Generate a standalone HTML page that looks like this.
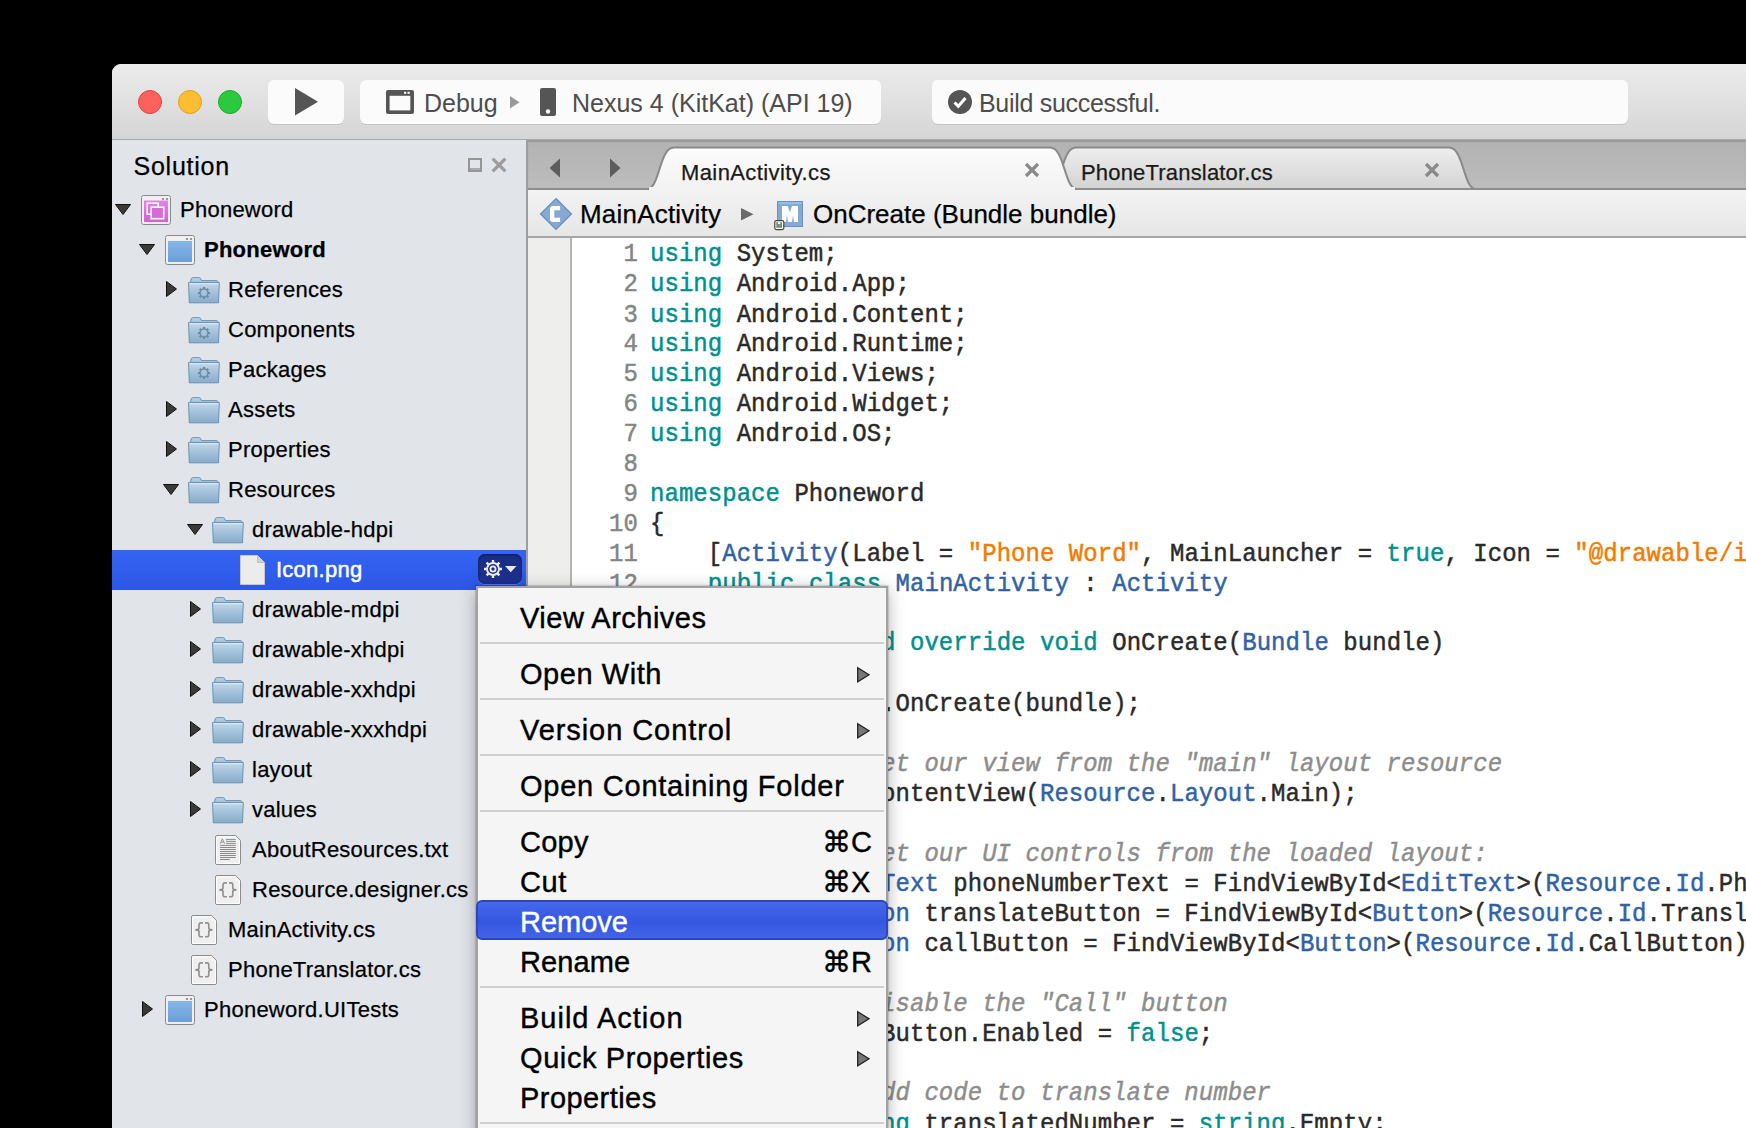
<!DOCTYPE html><html><head><meta charset="utf-8"><style>
*{margin:0;padding:0;box-sizing:border-box}
html,body{width:1746px;height:1128px;overflow:hidden;background:#000}
body{position:relative;font-family:"Liberation Sans",sans-serif}
.a{position:absolute}
svg{position:absolute;overflow:visible}
#win{position:absolute;left:112px;top:64px;width:1634px;height:1064px;background:#e1e4e9;border-top-left-radius:9px;overflow:hidden}
#tb{position:absolute;left:0;top:0;width:1634px;height:76px;background:linear-gradient(#ececec,#d5d5d5);border-bottom:1px solid #a9a9a9}
.tl{position:absolute;top:26px;width:24px;height:24px;border-radius:50%}
.pill{position:absolute;top:16px;height:44px;background:#fbfbfb;border-radius:6px;box-shadow:0 1px 0 #c4c4c4}
.tbt{position:absolute;font-size:25px;color:#4d4d4d;white-space:nowrap;line-height:30px}
.rt{position:absolute;font-size:22px;line-height:30px;color:#000;white-space:nowrap;-webkit-text-stroke:0.25px currentColor}
.tr{letter-spacing:0.25px}
.code{position:absolute;font-family:"Liberation Mono",monospace;font-size:24px;white-space:pre;line-height:27.2727px;color:#2a2a2a;transform:scaleY(1.1);transform-origin:0 0;-webkit-text-stroke:0.45px currentColor;letter-spacing:0.04px}
.ln{position:absolute;font-family:"Liberation Mono",monospace;font-size:24px;white-space:pre;line-height:27.2727px;color:#858585;text-align:right;width:60px;transform:scaleY(1.1);transform-origin:0 0;-webkit-text-stroke:0.45px currentColor;letter-spacing:0.04px}
.k{color:#00908f}.t{color:#3162a6}.s{color:#f27b00}.c{color:#8d8d8d;font-style:italic}
.mi{position:absolute;font-size:29px;line-height:34px;color:#000;white-space:nowrap;-webkit-text-stroke:0.4px currentColor}
.sep{position:absolute;left:4px;width:404px;height:2px;background:#cfcfcf}
</style></head><body>
<div id="win">
<div id="tb">
<div class="tl" style="left:26px;background:#fc615d;border:1px solid #e0443e"></div>
<div class="tl" style="left:66px;background:#fdbd30;border:1px solid #dfa023"></div>
<div class="tl" style="left:106px;background:#2bc940;border:1px solid #1aab29"></div>
<div class="pill" style="left:156px;width:76px"></div>
<div class="pill" style="left:248px;width:521px"></div>
<div class="pill" style="left:820px;width:696px"></div>
</div>
</div>
<svg style="left:295px;top:88px" width="24" height="28"><path d="M0 0 L23 13.75 L0 27.5Z" fill="#555"/></svg>
<svg style="left:386px;top:90px" width="28" height="24"><rect x="0" y="0" width="28" height="24" rx="2" fill="#555"/><rect x="3.6" y="5.8" width="20.7" height="14.6" fill="#fbfbfb"/><rect x="18" y="1.8" width="2.2" height="2" fill="#fbfbfb"/><rect x="21.5" y="1.8" width="2.2" height="2" fill="#fbfbfb"/></svg>
<div class="tbt" style="left:424px;top:88px">Debug</div>
<svg style="left:510px;top:96px" width="10" height="13"><path d="M0 0 L9.5 6.3 L0 12.6Z" fill="#9a9a9a"/></svg>
<svg style="left:540px;top:88px" width="16" height="28"><rect x="0" y="0" width="16" height="28" rx="2" fill="#555"/><circle cx="8" cy="23.5" r="2.2" fill="#fbfbfb"/></svg>
<div class="tbt" style="left:572px;top:88px">Nexus 4 (KitKat) (API 19)</div>
<svg style="left:948px;top:90px" width="24" height="24"><circle cx="12" cy="12" r="12" fill="#555"/><path d="M6.5 12.5 L10.3 16.3 L17.5 8" fill="none" stroke="#fff" stroke-width="3"/></svg>
<div class="tbt" style="left:979px;top:88px;letter-spacing:-0.3px">Build successful.</div>
<div class="a" style="left:526px;top:140px;width:2px;height:988px;background:#9a9fa3"></div>
<div class="rt" style="left:133.5px;top:151px;font-size:25px;letter-spacing:0.75px">Solution</div>
<svg style="left:468px;top:158px" width="15" height="14"><path d="M0 0 H14 V14 H0Z M2 2 V10.2 H12 V2Z" fill="#959595" fill-rule="evenodd"/><rect x="2" y="10.2" width="10" height="1.8" fill="#a9a9a9"/></svg>
<svg style="left:492px;top:158px" width="14" height="14"><path d="M1.8 1.8 L12.2 12.2 M12.2 1.8 L1.8 12.2" stroke="#9c9c9c" stroke-width="3.2" stroke-linecap="square"/></svg>
<div class="a" style="left:112px;top:550px;width:414px;height:40px;background:linear-gradient(#3463f2,#2d57e6)"></div>
<svg style="left:115px;top:204px" width="16" height="11"><path d="M0.5 0.5 L15.5 0.5 L8 10.5Z" fill="#3a3a3a" stroke="#111" stroke-width="1"/></svg>
<svg style="left:141px;top:195px" width="30" height="30"><defs><linearGradient id="gm" x1="0" y1="0" x2="0" y2="1"><stop offset="0" stop-color="#ea7fea"/><stop offset="1" stop-color="#d35fd3"/></linearGradient></defs><rect x="0.5" y="0.5" width="29" height="29" rx="2" fill="#f1efed" stroke="#8a8a8a"/><rect x="21" y="3" width="2" height="2" fill="#999"/><rect x="25" y="3" width="2" height="2" fill="#999"/><rect x="3" y="5.5" width="24" height="21.5" fill="url(#gm)"/><rect x="6.2" y="8.2" width="11" height="11" fill="none" stroke="#fff" stroke-width="1.6"/><rect x="10.2" y="12.2" width="12.5" height="11.5" fill="#d86ad8" stroke="#fff" stroke-width="1.6"/></svg>
<div class="rt tr" style="left:180px;top:195px;color:#000;">Phoneword</div>
<svg style="left:139px;top:244px" width="16" height="11"><path d="M0.5 0.5 L15.5 0.5 L8 10.5Z" fill="#3a3a3a" stroke="#111" stroke-width="1"/></svg>
<svg style="left:165px;top:235px" width="30" height="30"><defs><linearGradient id="gb" x1="0" y1="0" x2="0" y2="1"><stop offset="0" stop-color="#84b6ea"/><stop offset="1" stop-color="#6c9fd8"/></linearGradient></defs><rect x="0.5" y="0.5" width="29" height="29" rx="2" fill="#f1efed" stroke="#8a8a8a"/><rect x="21" y="3" width="2" height="2" fill="#999"/><rect x="25" y="3" width="2" height="2" fill="#999"/><rect x="3" y="6" width="24" height="21" fill="url(#gb)"/></svg>
<div class="rt tr" style="left:204px;top:235px;color:#000;font-weight:bold;">Phoneword</div>
<svg style="left:166px;top:281px" width="11" height="16"><path d="M0.5 0.5 L10.5 8 L0.5 15.5Z" fill="#3a3a3a" stroke="#111" stroke-width="1"/></svg>
<svg style="left:188px;top:277px" width="32" height="28"><defs><linearGradient id="gf" x1="0" y1="0" x2="0" y2="1"><stop offset="0" stop-color="#c0d7e9"/><stop offset="1" stop-color="#87acca"/></linearGradient><linearGradient id="gft" x1="0" y1="0" x2="0" y2="1"><stop offset="0" stop-color="#bcd6ea"/><stop offset="1" stop-color="#9dbdd6"/></linearGradient></defs><path d="M2.2 6 L3.2 2 Q3.7 0.6 5.2 0.6 L10.8 0.6 Q12.2 0.6 12.8 2 L13.6 3.6 L28 3.6 Q29.2 3.6 30 4.6 L31 6Z" fill="url(#gft)" stroke="#6d95b5" stroke-width="1"/><path d="M0.5 5.6 H31.3 L30.5 25.8 H1.3Z" fill="url(#gf)" stroke="#6a92b3" stroke-width="1"/><path d="M1.6 6.8 H30.2" stroke="#e2eff8" stroke-width="1"/><g transform="translate(16,16)"><circle r="4" fill="none" stroke="#6f8fab" stroke-width="1.6"/><path d="M0 -6V-3.8M0 3.8V6M-6 0H-3.8M3.8 0H6M-4.3 -4.3L-2.8 -2.8M2.8 2.8L4.3 4.3M4.3 -4.3L2.8 -2.8M-2.8 2.8L-4.3 4.3" stroke="#6a8aa6" stroke-width="2"/><circle r="1.8" fill="#a9c6dc"/></g></svg>
<div class="rt tr" style="left:228px;top:275px;color:#000;">References</div>
<svg style="left:188px;top:317px" width="32" height="28"><defs><linearGradient id="gf" x1="0" y1="0" x2="0" y2="1"><stop offset="0" stop-color="#c0d7e9"/><stop offset="1" stop-color="#87acca"/></linearGradient><linearGradient id="gft" x1="0" y1="0" x2="0" y2="1"><stop offset="0" stop-color="#bcd6ea"/><stop offset="1" stop-color="#9dbdd6"/></linearGradient></defs><path d="M2.2 6 L3.2 2 Q3.7 0.6 5.2 0.6 L10.8 0.6 Q12.2 0.6 12.8 2 L13.6 3.6 L28 3.6 Q29.2 3.6 30 4.6 L31 6Z" fill="url(#gft)" stroke="#6d95b5" stroke-width="1"/><path d="M0.5 5.6 H31.3 L30.5 25.8 H1.3Z" fill="url(#gf)" stroke="#6a92b3" stroke-width="1"/><path d="M1.6 6.8 H30.2" stroke="#e2eff8" stroke-width="1"/><g transform="translate(16,16)"><circle r="4" fill="none" stroke="#6f8fab" stroke-width="1.6"/><path d="M0 -6V-3.8M0 3.8V6M-6 0H-3.8M3.8 0H6M-4.3 -4.3L-2.8 -2.8M2.8 2.8L4.3 4.3M4.3 -4.3L2.8 -2.8M-2.8 2.8L-4.3 4.3" stroke="#6a8aa6" stroke-width="2"/><circle r="1.8" fill="#a9c6dc"/></g></svg>
<div class="rt tr" style="left:228px;top:315px;color:#000;">Components</div>
<svg style="left:188px;top:357px" width="32" height="28"><defs><linearGradient id="gf" x1="0" y1="0" x2="0" y2="1"><stop offset="0" stop-color="#c0d7e9"/><stop offset="1" stop-color="#87acca"/></linearGradient><linearGradient id="gft" x1="0" y1="0" x2="0" y2="1"><stop offset="0" stop-color="#bcd6ea"/><stop offset="1" stop-color="#9dbdd6"/></linearGradient></defs><path d="M2.2 6 L3.2 2 Q3.7 0.6 5.2 0.6 L10.8 0.6 Q12.2 0.6 12.8 2 L13.6 3.6 L28 3.6 Q29.2 3.6 30 4.6 L31 6Z" fill="url(#gft)" stroke="#6d95b5" stroke-width="1"/><path d="M0.5 5.6 H31.3 L30.5 25.8 H1.3Z" fill="url(#gf)" stroke="#6a92b3" stroke-width="1"/><path d="M1.6 6.8 H30.2" stroke="#e2eff8" stroke-width="1"/><g transform="translate(16,16)"><circle r="4" fill="none" stroke="#6f8fab" stroke-width="1.6"/><path d="M0 -6V-3.8M0 3.8V6M-6 0H-3.8M3.8 0H6M-4.3 -4.3L-2.8 -2.8M2.8 2.8L4.3 4.3M4.3 -4.3L2.8 -2.8M-2.8 2.8L-4.3 4.3" stroke="#6a8aa6" stroke-width="2"/><circle r="1.8" fill="#a9c6dc"/></g></svg>
<div class="rt tr" style="left:228px;top:355px;color:#000;">Packages</div>
<svg style="left:166px;top:401px" width="11" height="16"><path d="M0.5 0.5 L10.5 8 L0.5 15.5Z" fill="#3a3a3a" stroke="#111" stroke-width="1"/></svg>
<svg style="left:188px;top:397px" width="32" height="28"><defs><linearGradient id="gf" x1="0" y1="0" x2="0" y2="1"><stop offset="0" stop-color="#c0d7e9"/><stop offset="1" stop-color="#87acca"/></linearGradient><linearGradient id="gft" x1="0" y1="0" x2="0" y2="1"><stop offset="0" stop-color="#bcd6ea"/><stop offset="1" stop-color="#9dbdd6"/></linearGradient></defs><path d="M2.2 6 L3.2 2 Q3.7 0.6 5.2 0.6 L10.8 0.6 Q12.2 0.6 12.8 2 L13.6 3.6 L28 3.6 Q29.2 3.6 30 4.6 L31 6Z" fill="url(#gft)" stroke="#6d95b5" stroke-width="1"/><path d="M0.5 5.6 H31.3 L30.5 25.8 H1.3Z" fill="url(#gf)" stroke="#6a92b3" stroke-width="1"/><path d="M1.6 6.8 H30.2" stroke="#e2eff8" stroke-width="1"/></svg>
<div class="rt tr" style="left:228px;top:395px;color:#000;">Assets</div>
<svg style="left:166px;top:441px" width="11" height="16"><path d="M0.5 0.5 L10.5 8 L0.5 15.5Z" fill="#3a3a3a" stroke="#111" stroke-width="1"/></svg>
<svg style="left:188px;top:437px" width="32" height="28"><defs><linearGradient id="gf" x1="0" y1="0" x2="0" y2="1"><stop offset="0" stop-color="#c0d7e9"/><stop offset="1" stop-color="#87acca"/></linearGradient><linearGradient id="gft" x1="0" y1="0" x2="0" y2="1"><stop offset="0" stop-color="#bcd6ea"/><stop offset="1" stop-color="#9dbdd6"/></linearGradient></defs><path d="M2.2 6 L3.2 2 Q3.7 0.6 5.2 0.6 L10.8 0.6 Q12.2 0.6 12.8 2 L13.6 3.6 L28 3.6 Q29.2 3.6 30 4.6 L31 6Z" fill="url(#gft)" stroke="#6d95b5" stroke-width="1"/><path d="M0.5 5.6 H31.3 L30.5 25.8 H1.3Z" fill="url(#gf)" stroke="#6a92b3" stroke-width="1"/><path d="M1.6 6.8 H30.2" stroke="#e2eff8" stroke-width="1"/></svg>
<div class="rt tr" style="left:228px;top:435px;color:#000;">Properties</div>
<svg style="left:163px;top:484px" width="16" height="11"><path d="M0.5 0.5 L15.5 0.5 L8 10.5Z" fill="#3a3a3a" stroke="#111" stroke-width="1"/></svg>
<svg style="left:188px;top:477px" width="32" height="28"><defs><linearGradient id="gf" x1="0" y1="0" x2="0" y2="1"><stop offset="0" stop-color="#c0d7e9"/><stop offset="1" stop-color="#87acca"/></linearGradient><linearGradient id="gft" x1="0" y1="0" x2="0" y2="1"><stop offset="0" stop-color="#bcd6ea"/><stop offset="1" stop-color="#9dbdd6"/></linearGradient></defs><path d="M2.2 6 L3.2 2 Q3.7 0.6 5.2 0.6 L10.8 0.6 Q12.2 0.6 12.8 2 L13.6 3.6 L28 3.6 Q29.2 3.6 30 4.6 L31 6Z" fill="url(#gft)" stroke="#6d95b5" stroke-width="1"/><path d="M0.5 5.6 H31.3 L30.5 25.8 H1.3Z" fill="url(#gf)" stroke="#6a92b3" stroke-width="1"/><path d="M1.6 6.8 H30.2" stroke="#e2eff8" stroke-width="1"/></svg>
<div class="rt tr" style="left:228px;top:475px;color:#000;">Resources</div>
<svg style="left:187px;top:524px" width="16" height="11"><path d="M0.5 0.5 L15.5 0.5 L8 10.5Z" fill="#3a3a3a" stroke="#111" stroke-width="1"/></svg>
<svg style="left:212px;top:517px" width="32" height="28"><defs><linearGradient id="gf" x1="0" y1="0" x2="0" y2="1"><stop offset="0" stop-color="#c0d7e9"/><stop offset="1" stop-color="#87acca"/></linearGradient><linearGradient id="gft" x1="0" y1="0" x2="0" y2="1"><stop offset="0" stop-color="#bcd6ea"/><stop offset="1" stop-color="#9dbdd6"/></linearGradient></defs><path d="M2.2 6 L3.2 2 Q3.7 0.6 5.2 0.6 L10.8 0.6 Q12.2 0.6 12.8 2 L13.6 3.6 L28 3.6 Q29.2 3.6 30 4.6 L31 6Z" fill="url(#gft)" stroke="#6d95b5" stroke-width="1"/><path d="M0.5 5.6 H31.3 L30.5 25.8 H1.3Z" fill="url(#gf)" stroke="#6a92b3" stroke-width="1"/><path d="M1.6 6.8 H30.2" stroke="#e2eff8" stroke-width="1"/></svg>
<div class="rt tr" style="left:252px;top:515px;color:#000;">drawable-hdpi</div>
<svg style="left:240px;top:555px" width="25" height="30"><path d="M0.5 0.5 L17.5 0.5 L24.5 7.5 L24.5 29.5 L0.5 29.5Z" fill="#ececec" stroke="#c8c8c8"/><path d="M17.5 0.5 L17.5 7.5 L24.5 7.5" fill="#d0d0d0" stroke="#c0c0c0"/></svg>
<div class="rt tr" style="left:276px;top:555px;color:#fff;-webkit-text-stroke:0.5px #fff;">Icon.png</div>
<svg style="left:190px;top:601px" width="11" height="16"><path d="M0.5 0.5 L10.5 8 L0.5 15.5Z" fill="#3a3a3a" stroke="#111" stroke-width="1"/></svg>
<svg style="left:212px;top:597px" width="32" height="28"><defs><linearGradient id="gf" x1="0" y1="0" x2="0" y2="1"><stop offset="0" stop-color="#c0d7e9"/><stop offset="1" stop-color="#87acca"/></linearGradient><linearGradient id="gft" x1="0" y1="0" x2="0" y2="1"><stop offset="0" stop-color="#bcd6ea"/><stop offset="1" stop-color="#9dbdd6"/></linearGradient></defs><path d="M2.2 6 L3.2 2 Q3.7 0.6 5.2 0.6 L10.8 0.6 Q12.2 0.6 12.8 2 L13.6 3.6 L28 3.6 Q29.2 3.6 30 4.6 L31 6Z" fill="url(#gft)" stroke="#6d95b5" stroke-width="1"/><path d="M0.5 5.6 H31.3 L30.5 25.8 H1.3Z" fill="url(#gf)" stroke="#6a92b3" stroke-width="1"/><path d="M1.6 6.8 H30.2" stroke="#e2eff8" stroke-width="1"/></svg>
<div class="rt tr" style="left:252px;top:595px;color:#000;">drawable-mdpi</div>
<svg style="left:190px;top:641px" width="11" height="16"><path d="M0.5 0.5 L10.5 8 L0.5 15.5Z" fill="#3a3a3a" stroke="#111" stroke-width="1"/></svg>
<svg style="left:212px;top:637px" width="32" height="28"><defs><linearGradient id="gf" x1="0" y1="0" x2="0" y2="1"><stop offset="0" stop-color="#c0d7e9"/><stop offset="1" stop-color="#87acca"/></linearGradient><linearGradient id="gft" x1="0" y1="0" x2="0" y2="1"><stop offset="0" stop-color="#bcd6ea"/><stop offset="1" stop-color="#9dbdd6"/></linearGradient></defs><path d="M2.2 6 L3.2 2 Q3.7 0.6 5.2 0.6 L10.8 0.6 Q12.2 0.6 12.8 2 L13.6 3.6 L28 3.6 Q29.2 3.6 30 4.6 L31 6Z" fill="url(#gft)" stroke="#6d95b5" stroke-width="1"/><path d="M0.5 5.6 H31.3 L30.5 25.8 H1.3Z" fill="url(#gf)" stroke="#6a92b3" stroke-width="1"/><path d="M1.6 6.8 H30.2" stroke="#e2eff8" stroke-width="1"/></svg>
<div class="rt tr" style="left:252px;top:635px;color:#000;">drawable-xhdpi</div>
<svg style="left:190px;top:681px" width="11" height="16"><path d="M0.5 0.5 L10.5 8 L0.5 15.5Z" fill="#3a3a3a" stroke="#111" stroke-width="1"/></svg>
<svg style="left:212px;top:677px" width="32" height="28"><defs><linearGradient id="gf" x1="0" y1="0" x2="0" y2="1"><stop offset="0" stop-color="#c0d7e9"/><stop offset="1" stop-color="#87acca"/></linearGradient><linearGradient id="gft" x1="0" y1="0" x2="0" y2="1"><stop offset="0" stop-color="#bcd6ea"/><stop offset="1" stop-color="#9dbdd6"/></linearGradient></defs><path d="M2.2 6 L3.2 2 Q3.7 0.6 5.2 0.6 L10.8 0.6 Q12.2 0.6 12.8 2 L13.6 3.6 L28 3.6 Q29.2 3.6 30 4.6 L31 6Z" fill="url(#gft)" stroke="#6d95b5" stroke-width="1"/><path d="M0.5 5.6 H31.3 L30.5 25.8 H1.3Z" fill="url(#gf)" stroke="#6a92b3" stroke-width="1"/><path d="M1.6 6.8 H30.2" stroke="#e2eff8" stroke-width="1"/></svg>
<div class="rt tr" style="left:252px;top:675px;color:#000;">drawable-xxhdpi</div>
<svg style="left:190px;top:721px" width="11" height="16"><path d="M0.5 0.5 L10.5 8 L0.5 15.5Z" fill="#3a3a3a" stroke="#111" stroke-width="1"/></svg>
<svg style="left:212px;top:717px" width="32" height="28"><defs><linearGradient id="gf" x1="0" y1="0" x2="0" y2="1"><stop offset="0" stop-color="#c0d7e9"/><stop offset="1" stop-color="#87acca"/></linearGradient><linearGradient id="gft" x1="0" y1="0" x2="0" y2="1"><stop offset="0" stop-color="#bcd6ea"/><stop offset="1" stop-color="#9dbdd6"/></linearGradient></defs><path d="M2.2 6 L3.2 2 Q3.7 0.6 5.2 0.6 L10.8 0.6 Q12.2 0.6 12.8 2 L13.6 3.6 L28 3.6 Q29.2 3.6 30 4.6 L31 6Z" fill="url(#gft)" stroke="#6d95b5" stroke-width="1"/><path d="M0.5 5.6 H31.3 L30.5 25.8 H1.3Z" fill="url(#gf)" stroke="#6a92b3" stroke-width="1"/><path d="M1.6 6.8 H30.2" stroke="#e2eff8" stroke-width="1"/></svg>
<div class="rt tr" style="left:252px;top:715px;color:#000;">drawable-xxxhdpi</div>
<svg style="left:190px;top:761px" width="11" height="16"><path d="M0.5 0.5 L10.5 8 L0.5 15.5Z" fill="#3a3a3a" stroke="#111" stroke-width="1"/></svg>
<svg style="left:212px;top:757px" width="32" height="28"><defs><linearGradient id="gf" x1="0" y1="0" x2="0" y2="1"><stop offset="0" stop-color="#c0d7e9"/><stop offset="1" stop-color="#87acca"/></linearGradient><linearGradient id="gft" x1="0" y1="0" x2="0" y2="1"><stop offset="0" stop-color="#bcd6ea"/><stop offset="1" stop-color="#9dbdd6"/></linearGradient></defs><path d="M2.2 6 L3.2 2 Q3.7 0.6 5.2 0.6 L10.8 0.6 Q12.2 0.6 12.8 2 L13.6 3.6 L28 3.6 Q29.2 3.6 30 4.6 L31 6Z" fill="url(#gft)" stroke="#6d95b5" stroke-width="1"/><path d="M0.5 5.6 H31.3 L30.5 25.8 H1.3Z" fill="url(#gf)" stroke="#6a92b3" stroke-width="1"/><path d="M1.6 6.8 H30.2" stroke="#e2eff8" stroke-width="1"/></svg>
<div class="rt tr" style="left:252px;top:755px;color:#000;">layout</div>
<svg style="left:190px;top:801px" width="11" height="16"><path d="M0.5 0.5 L10.5 8 L0.5 15.5Z" fill="#3a3a3a" stroke="#111" stroke-width="1"/></svg>
<svg style="left:212px;top:797px" width="32" height="28"><defs><linearGradient id="gf" x1="0" y1="0" x2="0" y2="1"><stop offset="0" stop-color="#c0d7e9"/><stop offset="1" stop-color="#87acca"/></linearGradient><linearGradient id="gft" x1="0" y1="0" x2="0" y2="1"><stop offset="0" stop-color="#bcd6ea"/><stop offset="1" stop-color="#9dbdd6"/></linearGradient></defs><path d="M2.2 6 L3.2 2 Q3.7 0.6 5.2 0.6 L10.8 0.6 Q12.2 0.6 12.8 2 L13.6 3.6 L28 3.6 Q29.2 3.6 30 4.6 L31 6Z" fill="url(#gft)" stroke="#6d95b5" stroke-width="1"/><path d="M0.5 5.6 H31.3 L30.5 25.8 H1.3Z" fill="url(#gf)" stroke="#6a92b3" stroke-width="1"/><path d="M1.6 6.8 H30.2" stroke="#e2eff8" stroke-width="1"/></svg>
<div class="rt tr" style="left:252px;top:795px;color:#000;">values</div>
<svg style="left:215px;top:835px" width="26" height="30"><path d="M0.5 2 Q0.5 0.5 2 0.5 L20.6 0.5 L25.5 5.4 L25.5 28 Q25.5 29.5 24 29.5 L2 29.5 Q0.5 29.5 0.5 28Z" fill="#efefef" stroke="#8d8d8d" stroke-width="1"/><path d="M1.6 28.4 V2 H20.1 L24.4 6.3 V28.4Z" fill="none" stroke="#fff" stroke-width="1"/><path d="M20 1 L20 6 L25 6Z" fill="#f6f6f6"/><path d="M5.2 8.7 L7.4 3.9 L9.6 8.7 M6.1 7.2 H8.7" fill="none" stroke="#8a8a8a" stroke-width="0.9"/><path d="M11 4.4H20.8M11 6.4H20.8M11 8.4H20.8M5 10.4H20.8M5 12.5H20.8M5 14.5H20.8M5 16.5H20.8M5 18.5H20.8M5 20.5H20.8M5 22.5H20.8M5 24.5H14.7" stroke="#8a8a8a" stroke-width="1"/></svg>
<div class="rt tr" style="left:252px;top:835px;color:#000;">AboutResources.txt</div>
<svg style="left:215px;top:875px" width="26" height="30"><path d="M0.5 2 Q0.5 0.5 2 0.5 L20.6 0.5 L25.5 5.4 L25.5 28 Q25.5 29.5 24 29.5 L2 29.5 Q0.5 29.5 0.5 28Z" fill="#efefef" stroke="#8d8d8d" stroke-width="1"/><path d="M1.6 28.4 V2 H20.1 L24.4 6.3 V28.4Z" fill="none" stroke="#fff" stroke-width="1"/><path d="M20 1 L20 6 L25 6Z" fill="#f6f6f6"/><path d="M11.9 7.9 H10 Q8 7.9 8 10 V13.3 Q8 14.9 4.3 14.9 Q8 14.9 8 16.5 V19.8 Q8 21.8 10 21.8 H11.9 M14 7.9 H15.8 Q17.8 7.9 17.8 10 V13.3 Q17.8 14.9 21.5 14.9 Q17.8 14.9 17.8 16.5 V19.8 Q17.8 21.8 15.8 21.8 H14" fill="none" stroke="#8f8f8f" stroke-width="1.6"/></svg>
<div class="rt tr" style="left:252px;top:875px;color:#000;">Resource.designer.cs</div>
<svg style="left:191px;top:915px" width="26" height="30"><path d="M0.5 2 Q0.5 0.5 2 0.5 L20.6 0.5 L25.5 5.4 L25.5 28 Q25.5 29.5 24 29.5 L2 29.5 Q0.5 29.5 0.5 28Z" fill="#efefef" stroke="#8d8d8d" stroke-width="1"/><path d="M1.6 28.4 V2 H20.1 L24.4 6.3 V28.4Z" fill="none" stroke="#fff" stroke-width="1"/><path d="M20 1 L20 6 L25 6Z" fill="#f6f6f6"/><path d="M11.9 7.9 H10 Q8 7.9 8 10 V13.3 Q8 14.9 4.3 14.9 Q8 14.9 8 16.5 V19.8 Q8 21.8 10 21.8 H11.9 M14 7.9 H15.8 Q17.8 7.9 17.8 10 V13.3 Q17.8 14.9 21.5 14.9 Q17.8 14.9 17.8 16.5 V19.8 Q17.8 21.8 15.8 21.8 H14" fill="none" stroke="#8f8f8f" stroke-width="1.6"/></svg>
<div class="rt tr" style="left:228px;top:915px;color:#000;">MainActivity.cs</div>
<svg style="left:191px;top:955px" width="26" height="30"><path d="M0.5 2 Q0.5 0.5 2 0.5 L20.6 0.5 L25.5 5.4 L25.5 28 Q25.5 29.5 24 29.5 L2 29.5 Q0.5 29.5 0.5 28Z" fill="#efefef" stroke="#8d8d8d" stroke-width="1"/><path d="M1.6 28.4 V2 H20.1 L24.4 6.3 V28.4Z" fill="none" stroke="#fff" stroke-width="1"/><path d="M20 1 L20 6 L25 6Z" fill="#f6f6f6"/><path d="M11.9 7.9 H10 Q8 7.9 8 10 V13.3 Q8 14.9 4.3 14.9 Q8 14.9 8 16.5 V19.8 Q8 21.8 10 21.8 H11.9 M14 7.9 H15.8 Q17.8 7.9 17.8 10 V13.3 Q17.8 14.9 21.5 14.9 Q17.8 14.9 17.8 16.5 V19.8 Q17.8 21.8 15.8 21.8 H14" fill="none" stroke="#8f8f8f" stroke-width="1.6"/></svg>
<div class="rt tr" style="left:228px;top:955px;color:#000;">PhoneTranslator.cs</div>
<svg style="left:142px;top:1001px" width="11" height="16"><path d="M0.5 0.5 L10.5 8 L0.5 15.5Z" fill="#3a3a3a" stroke="#111" stroke-width="1"/></svg>
<svg style="left:165px;top:995px" width="30" height="30"><defs><linearGradient id="gb" x1="0" y1="0" x2="0" y2="1"><stop offset="0" stop-color="#84b6ea"/><stop offset="1" stop-color="#6c9fd8"/></linearGradient></defs><rect x="0.5" y="0.5" width="29" height="29" rx="2" fill="#f1efed" stroke="#8a8a8a"/><rect x="21" y="3" width="2" height="2" fill="#999"/><rect x="25" y="3" width="2" height="2" fill="#999"/><rect x="3" y="6" width="24" height="21" fill="url(#gb)"/></svg>
<div class="rt tr" style="left:204px;top:995px;color:#000;">Phoneword.UITests</div>
<div class="a" style="left:478px;top:554px;width:44px;height:30px;border-radius:7px;background:linear-gradient(#192c80,#1c3192);box-shadow:0 1px 0 #5a7ae8, inset 0 1px 2px #0d1a5a"></div>
<svg style="left:483px;top:559px" width="36" height="20"><g transform="translate(10,10)" fill="none" stroke="#f0f0f0"><circle r="6" stroke-width="1.8"/><circle r="2.6" stroke-width="1.8"/><path d="M0 -9V-6.5M0 6.5V9M-9 0H-6.5M6.5 0H9M-6.4 -6.4L-4.6 -4.6M4.6 4.6L6.4 6.4M6.4 -6.4L4.6 -4.6M-4.6 4.6L-6.4 6.4" stroke-width="2.4"/></g><path d="M22 7 L33.5 7 L27.75 13.2Z" fill="#e8e8e8"/></svg>
<div class="a" style="left:528px;top:140px;width:1218px;height:50px;background:linear-gradient(#b2b2b2,#bdbdbd);box-shadow:inset 0 2px 1px #9a9a9a"></div>
<svg style="left:549px;top:158px" width="12" height="20"><path d="M11 0.5 L11 19.5 L0.5 10Z" fill="#5d5d5d"/></svg>
<svg style="left:609px;top:158px" width="12" height="20"><path d="M1 0.5 L1 19.5 L11.5 10Z" fill="#5d5d5d"/></svg>
<svg style="left:528px;top:140px" width="1218" height="52"><defs><linearGradient id="gt2" x1="0" y1="0" x2="0" y2="1"><stop offset="0" stop-color="#eeeeee"/><stop offset="1" stop-color="#d3d3d3"/></linearGradient><linearGradient id="gt1" x1="0" y1="0" x2="0" y2="1"><stop offset="0" stop-color="#fcfcfc"/><stop offset="1" stop-color="#f2f2f2"/></linearGradient></defs><path d="M521 49 C534 49 533 7.5 548 7.5 L921 7.5 C936 7.5 935 49 948 49 Z" fill="url(#gt2)"/><path d="M521 49 C534 49 533 7.5 548 7.5 L921 7.5 C936 7.5 935 49 948 49" fill="none" stroke="#8a8a8a" stroke-width="2"/><path d="M0 49 H1218" stroke="#8e8e8e" stroke-width="2"/><path d="M119 49 C132 49 131 7.5 146 7.5 L522 7.5 C537 7.5 536 49 549 49 Z" fill="url(#gt1)"/><path d="M119 49 C132 49 131 7.5 146 7.5 L522 7.5 C537 7.5 536 49 549 49" fill="none" stroke="#8a8a8a" stroke-width="2"/><rect x="121" y="47" width="426" height="5" fill="#f3f3f3"/></svg>
<div class="rt" style="left:681px;top:158px;font-size:22px;letter-spacing:0.4px;color:#1a1a1a">MainActivity.cs</div>
<div class="rt" style="left:1081px;top:158px;font-size:22px;letter-spacing:0.18px;color:#1a1a1a">PhoneTranslator.cs</div>
<svg style="left:1024px;top:162px" width="16" height="16"><path d="M2 2 L14 14 M14 2 L2 14" stroke="#8a8a8a" stroke-width="3.2"/></svg>
<svg style="left:1424px;top:162px" width="16" height="16"><path d="M2 2 L14 14 M14 2 L2 14" stroke="#8a8a8a" stroke-width="3.2"/></svg>
<div class="a" style="left:528px;top:190px;width:1218px;height:48px;background:linear-gradient(#f3f3f3,#e6e6e6);border-bottom:2px solid #a6a6a6"></div>
<svg style="left:540px;top:198px" width="32" height="32"><path d="M16 0.5 L31.5 16 L16 31.5 L0.5 16Z" fill="#86a8d3" stroke="#6a8fbf" stroke-width="1.2"/><path d="M20.1 7.9 H13 Q10 7.9 10 11 V21 Q10 24 13 24 H20.1 V19.7 H14.3 V12.3 H20.1 Z" fill="#fff"/></svg>
<div class="rt" style="left:580px;top:199px;font-size:26px;letter-spacing:0.2px">MainActivity</div>
<svg style="left:741px;top:208px" width="13" height="13"><path d="M0 0 L12.5 6.3 L0 12.6Z" fill="#6a6a6a"/></svg>
<svg style="left:774px;top:200px" width="30" height="32"><rect x="3.5" y="1.5" width="25" height="25" fill="#86a8d6" stroke="#6b90c1"/><path d="M4.5 3 H27.5" stroke="#a9c8ee" stroke-width="1.2"/><path d="M8 5.9 H13.7 L15.9 12.6 L18 5.9 H24 V22 H20 L19 14.9 L18 22 H14 L13 14.9 L12 22 H8Z" fill="#fff"/><rect x="0.8" y="20.6" width="9" height="9" rx="1.5" fill="#fff" stroke="#444" stroke-width="1.2"/><rect x="2.2" y="22.2" width="5.8" height="5.6" fill="#7d8c7d"/><rect x="4" y="22.2" width="2.2" height="1.9" fill="#fff"/></svg>
<div class="rt" style="left:813px;top:199px;font-size:26px">OnCreate (Bundle bundle)</div>
<div class="a" style="left:528px;top:238px;width:42px;height:890px;background:#eeeeec"></div>
<div class="a" style="left:570px;top:238px;width:2px;height:890px;background:#b3b3b3"></div>
<div class="a" style="left:572px;top:238px;width:1174px;height:890px;background:#fff"></div>
<div class="ln" style="left:578px;top:239px">1
2
3
4
5
6
7
8
9
10
11
12
13
14
15
16
17
18
19
20
21
22
23
24
25
26
27
28
29
30</div>
<div class="code" style="left:650px;top:239px"><span class="k">using</span> System;
<span class="k">using</span> Android.App;
<span class="k">using</span> Android.Content;
<span class="k">using</span> Android.Runtime;
<span class="k">using</span> Android.Views;
<span class="k">using</span> Android.Widget;
<span class="k">using</span> Android.OS;

<span class="k">namespace</span> Phoneword
{
    [<span class="t">Activity</span>(Label = <span class="s">"Phone Word"</span>, MainLauncher = <span class="k">true</span>, Icon = <span class="s">"@drawable/icon"</span>)]
    <span class="k">public</span> <span class="k">class</span> <span class="t">MainActivity</span> : <span class="t">Activity</span>
    {
        <span class="k">protected</span> <span class="k">override</span> <span class="k">void</span> OnCreate(<span class="t">Bundle</span> bundle)
        {
            <span class="k">base</span>.OnCreate(bundle);

            <span class="c">// Set our view from the "main" layout resource</span>
            SetContentView(<span class="t">Resource</span>.<span class="t">Layout</span>.Main);

            <span class="c">// Get our UI controls from the loaded layout:</span>
            <span class="t">EditText</span> phoneNumberText = FindViewById&lt;<span class="t">EditText</span>&gt;(<span class="t">Resource</span>.<span class="t">Id</span>.PhoneNumberText);
            <span class="t">Button</span> translateButton = FindViewById&lt;<span class="t">Button</span>&gt;(<span class="t">Resource</span>.<span class="t">Id</span>.TranslateButton);
            <span class="t">Button</span> callButton = FindViewById&lt;<span class="t">Button</span>&gt;(<span class="t">Resource</span>.<span class="t">Id</span>.CallButton);

            <span class="c">// Disable the "Call" button</span>
            callButton.Enabled = <span class="k">false</span>;

            <span class="c">// Add code to translate number</span>
            <span class="k">string</span> translatedNumber = <span class="k">string</span>.Empty;</div>
<div class="a" style="left:476px;top:586px;width:412px;height:560px;background:#f5f5f5;border:2px solid #a2a2a2;box-shadow:0 0 1px 1px rgba(0,0,0,0.12), 0 4px 16px rgba(0,0,0,0.30)"></div>
<div class="sep" style="left:480px;top:642px;"></div>
<div class="sep" style="left:480px;top:698px;"></div>
<div class="sep" style="left:480px;top:754px;"></div>
<div class="sep" style="left:480px;top:810px;"></div>
<div class="sep" style="left:480px;top:986px;"></div>
<div class="sep" style="left:480px;top:1122px;"></div>
<div class="a" style="left:476px;top:900px;width:412px;height:40px;border-radius:6px;background:linear-gradient(#4668eb,#3557e0 55%,#4364e7);border:2px solid #2c47bb"></div>
<div class="mi" style="left:520px;top:601px;color:#000;letter-spacing:0.5px">View Archives</div>
<div class="mi" style="left:520px;top:657px;color:#000;letter-spacing:0.55px">Open With</div>
<svg style="left:857px;top:667px" width="13" height="16"><path d="M0.7 0.7 L12 7.75 L0.7 14.8Z" fill="#777" stroke="#222" stroke-width="1.3"/></svg>
<div class="mi" style="left:520px;top:713px;color:#000;letter-spacing:0.93px">Version Control</div>
<svg style="left:857px;top:723px" width="13" height="16"><path d="M0.7 0.7 L12 7.75 L0.7 14.8Z" fill="#777" stroke="#222" stroke-width="1.3"/></svg>
<div class="mi" style="left:520px;top:769px;color:#000;letter-spacing:0.76px">Open Containing Folder</div>
<div class="mi" style="left:520px;top:825px;color:#000;letter-spacing:0.27px">Copy</div>
<div class="mi" style="left:822px;top:825px">&#8984;C</div>
<div class="mi" style="left:520px;top:865px;color:#000;letter-spacing:0.6px">Cut</div>
<div class="mi" style="left:822px;top:865px">&#8984;X</div>
<div class="mi" style="left:520px;top:905px;color:#fff;letter-spacing:0.0px">Remove</div>
<div class="mi" style="left:520px;top:945px;color:#000;letter-spacing:0.1px">Rename</div>
<div class="mi" style="left:822px;top:945px">&#8984;R</div>
<div class="mi" style="left:520px;top:1001px;color:#000;letter-spacing:1.0px">Build Action</div>
<svg style="left:857px;top:1011px" width="13" height="16"><path d="M0.7 0.7 L12 7.75 L0.7 14.8Z" fill="#777" stroke="#222" stroke-width="1.3"/></svg>
<div class="mi" style="left:520px;top:1041px;color:#000;letter-spacing:0.59px">Quick Properties</div>
<svg style="left:857px;top:1051px" width="13" height="16"><path d="M0.7 0.7 L12 7.75 L0.7 14.8Z" fill="#777" stroke="#222" stroke-width="1.3"/></svg>
<div class="mi" style="left:520px;top:1081px;color:#000;letter-spacing:0.44px">Properties</div>
</body></html>
